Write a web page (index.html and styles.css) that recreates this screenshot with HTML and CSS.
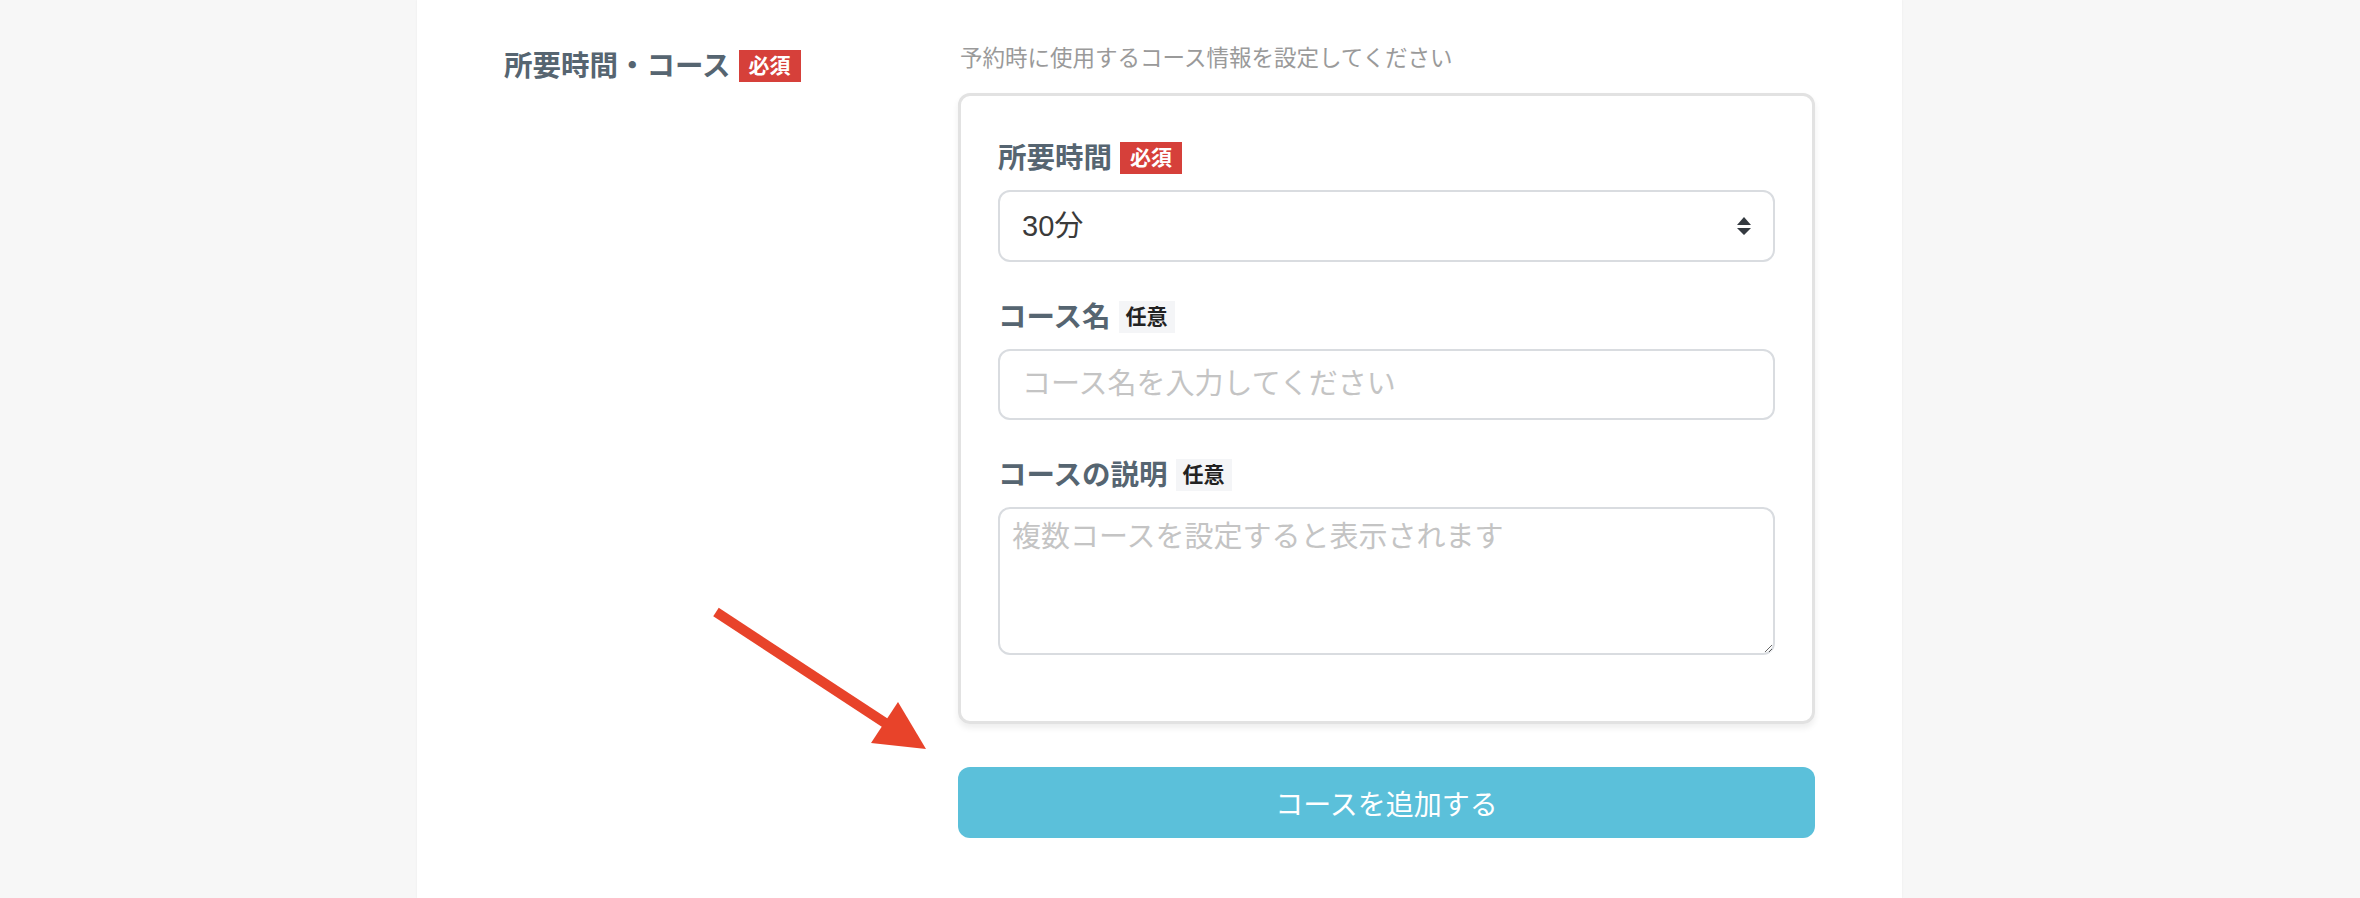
FILE: index.html
```html
<!DOCTYPE html>
<html lang="ja">
<head>
<meta charset="utf-8">
<title>所要時間・コース</title>
<link rel="stylesheet" href="styles.css">
</head>
<body>
<div class="panel">
  <div class="label-col">
    <div class="title">所要時間・コース<span class="badge req">必須</span></div>
  </div>
  <div class="content-col">
    <p class="help">予約時に使用するコース情報を設定してください</p>
    <div class="card">
      <div class="field">
        <div class="field-label">所要時間<span class="badge req">必須</span></div>
        <div class="select-wrap">
          <select class="control select">
            <option>30分</option>
          </select>
          <svg class="caret" width="14" height="18" viewBox="0 0 14 18"><path d="M7 0 L14 8 L0 8 Z M0 11 L14 11 L7 18 Z" fill="#343a40"/></svg>
        </div>
      </div>
      <div class="field">
        <div class="field-label">コース名<span class="badge opt">任意</span></div>
        <input class="control input" type="text" placeholder="コース名を入力してください">
      </div>
      <div class="field">
        <div class="field-label">コースの説明<span class="badge opt">任意</span></div>
        <textarea class="control textarea" placeholder="複数コースを設定すると表示されます"></textarea>
      </div>
    </div>
    <button class="add-btn" type="button">コースを追加する</button>
  </div>
  <svg class="pointer" width="240" height="160" viewBox="0 0 240 160">
    <line x1="16" y1="12" x2="186" y2="123.5" stroke="#e8432a" stroke-width="10"/>
    <polygon points="198,102 171,143 226,149" fill="#e8432a"/>
  </svg>
</div>
</body>
</html>
```

FILE: styles.css
```css
* { box-sizing: border-box; }
html, body { margin: 0; padding: 0; }
body {
  background: #f7f7f7;
  font-family: "Liberation Sans", "Noto Sans CJK JP", sans-serif;
  height: 898px;
  overflow: hidden;
}
.panel {
  position: relative;
  margin-left: 417px;
  width: 1485px;
  min-height: 898px;
  background: #ffffff;
  box-shadow: 0 0 2px rgba(0,0,0,0.06);
  padding: 0 87px;
  display: flex;
}
.label-col {
  width: 454px;
  padding-top: 48px;
}
.content-col {
  width: 857px;
  padding-top: 43px;
}
.title, .field-label {
  display: flex;
  align-items: center;
  gap: 8px;
  font-size: 28.5px;
  line-height: 36px;
  font-weight: 700;
  color: #566571;
}
.badge {
  display: inline-block;
  font-size: 21px;
  line-height: 32px;
  height: 32px;
  font-weight: 700;
}
.badge.req {
  background: #d6403a;
  color: #ffffff;
  padding: 0 10px;
}
.badge.opt {
  background: #f4f5f7;
  color: #222222;
  padding: 0 7px;
}
.help {
  margin: 0 0 18px 2px;
  font-size: 22.5px;
  line-height: 32px;
  color: #9a9a9a;
}
.card {
  border: 3px solid #e2e2e2;
  border-radius: 12px;
  padding: 44px 37px 66px;
  box-shadow: 0 4px 6px rgba(0,0,0,0.07);
  display: flex;
  flex-direction: column;
  gap: 37px;
}
.field {
  display: flex;
  flex-direction: column;
  gap: 14px;
}
.select-wrap {
  position: relative;
}
.control {
  display: block;
  width: 100%;
  border: 2px solid #d9dce0;
  border-radius: 12px;
  background: #ffffff;
  font-family: "Liberation Sans", "Noto Sans CJK JP", sans-serif;
  font-size: 29px;
  color: #3a3a3a;
  outline: none;
}
.select {
  height: 72px;
  padding: 0 22px;
  appearance: none;
  -webkit-appearance: none;
}
.caret {
  position: absolute;
  right: 24px;
  top: 27px;
}
.input {
  height: 71px;
  padding: 0 22px;
}
.textarea {
  height: 148px;
  padding: 10px 12px;
  line-height: 36px;
  resize: vertical;
}
.control::placeholder {
  color: #c4c4c4;
}
.add-btn {
  display: block;
  width: 100%;
  margin-top: 43px;
  height: 71px;
  border: none;
  border-radius: 12px;
  background: #5bc0da;
  color: #ffffff;
  font-family: "Liberation Sans", "Noto Sans CJK JP", sans-serif;
  font-size: 28px;
}
.pointer {
  position: absolute;
  left: 283px;
  top: 600px;
}
```
